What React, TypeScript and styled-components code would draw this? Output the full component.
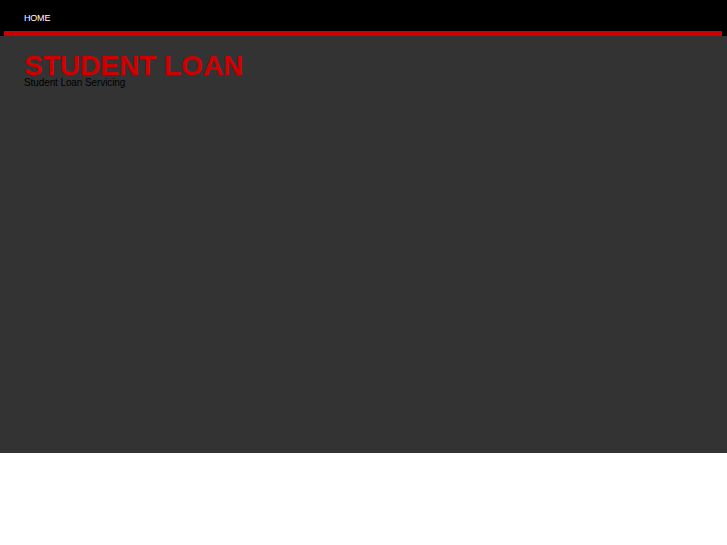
import React from "react";
import styled, { createGlobalStyle } from "styled-components";

const GlobalStyle = createGlobalStyle`
  html, body {
    margin: 0;
    padding: 0;
    background: #ffffff;
    font-family: "Liberation Sans", Arial, sans-serif;
  }
`;

const App: React.FC = () => {
  return (
    <>
      <GlobalStyle />
      <Header>
        <Nav>
          <NavLink href="#">HOME</NavLink>
        </Nav>
        <RedBar />
      </Header>
      <Main>
        <Title>STUDENT LOAN</Title>
        <Tagline>Student Loan Servicing</Tagline>
      </Main>
    </>
  );
};

const Header = styled.header`
  background-color: #000000;
`;

const Nav = styled.nav`
  display: flex;
  align-items: center;
  height: 31px;
  padding-left: 24px;
`;

const NavLink = styled.a`
  color: #ffffff;
  font-size: 9px;
  line-height: 9px;
  letter-spacing: -0.2px;
  text-decoration: none;
  margin-top: 5px;
`;

const RedBar = styled.div`
  height: 5px;
  margin: 0 5px 0 4px;
  background-color: #cc0000;
`;

const Main = styled.main`
  display: flex;
  flex-direction: column;
  align-items: flex-start;
  height: 417px;
  box-sizing: border-box;
  padding: 19px 24px 0 24px;
  background-color: #333333;
`;

const Title = styled.h1`
  margin: 0;
  font-size: 28px;
  line-height: 22px;
  font-weight: bold;
  color: #cc0000;
`;

const Tagline = styled.p`
  margin: 1px 0 0 0;
  font-size: 10px;
  line-height: 10px;
  letter-spacing: -0.1px;
  color: #000000;
`;

export default App;
